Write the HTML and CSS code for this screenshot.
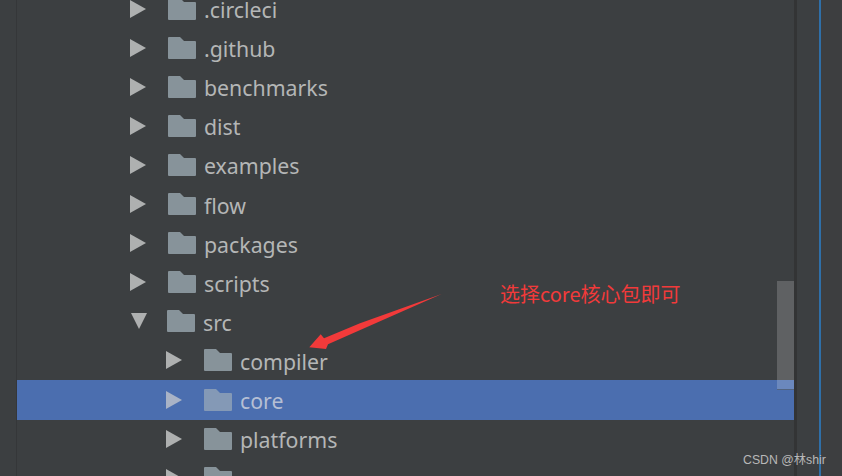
FILE: index.html
```html
<!DOCTYPE html>
<html>

<head>
  <meta name="viewport" content="width=device-width, initial-scale=1">
  <title>Project tree</title>
  <link rel="stylesheet" href="styles.css">
</head>

<body>
  <svg width="0" height="0" class="defs">
    <symbol id="folder" viewBox="0 0 28 22">
      <path d="M0 1 Q0 0 1 0 H12 L16 4 H27 Q28 4 28 5 V21 Q28 22 27 22 H1 Q0 22 0 21 Z" />
    </symbol>
  </svg>

  <div class="window">
    <div class="gutter"></div>

    <div class="tree-panel">
      <ul class="tree">
        <li class="row"><i class="arrow"></i><svg class="folder"><use href="#folder" /></svg><span>.circleci</span></li>
        <li class="row"><i class="arrow"></i><svg class="folder"><use href="#folder" /></svg><span>.github</span></li>
        <li class="row"><i class="arrow"></i><svg class="folder"><use href="#folder" /></svg><span>benchmarks</span></li>
        <li class="row"><i class="arrow"></i><svg class="folder"><use href="#folder" /></svg><span>dist</span></li>
        <li class="row"><i class="arrow"></i><svg class="folder"><use href="#folder" /></svg><span>examples</span></li>
        <li class="row"><i class="arrow"></i><svg class="folder"><use href="#folder" /></svg><span>flow</span></li>
        <li class="row"><i class="arrow"></i><svg class="folder"><use href="#folder" /></svg><span>packages</span></li>
        <li class="row"><i class="arrow"></i><svg class="folder"><use href="#folder" /></svg><span>scripts</span></li>
        <li class="row"><i class="arrow open"></i><svg class="folder"><use href="#folder" /></svg><span>src</span></li>
        <li class="row child"><i class="arrow"></i><svg class="folder"><use href="#folder" /></svg><span>compiler</span></li>
        <li class="row child selected"><i class="arrow"></i><svg class="folder"><use href="#folder" /></svg><span>core</span></li>
        <li class="row child"><i class="arrow"></i><svg class="folder"><use href="#folder" /></svg><span>platforms</span></li>
        <li class="row child"><i class="arrow"></i><svg class="folder"><use href="#folder" /></svg><span></span></li>
      </ul>
      <div class="scroll-thumb"></div>
    </div>

    <div class="divider"></div>
    <div class="side-strip"></div>
    <div class="blue-line"></div>
    <div class="far-strip"></div>

    <!-- 붉은 주석 -->
    <svg class="note-arrow" width="140" height="65" viewBox="0 0 140 65">
      <path d="M132.700 2 L51 31.300 L15 46.300 L11.700 42.300 L0.300 55.300 L17 57 L19 52.300 Z" />
    </svg>
    <div class="note-text">选择core核心包即可</div>
    <div class="watermark">CSDN @林shir</div>
  </div>
</body>

</html>
```

FILE: styles.css
```css
* {
  box-sizing: border-box;
}

html,
body {
  margin: 0;
  height: 100%;
  overflow: hidden;
  background-color: #3c3f41;
}

.defs {
  position: absolute;
}

.window {
  position: relative;
  display: flex;
  width: 842px;
  height: 476px;
  overflow: hidden;
  background-color: #3c3f41;
  font-family: "Noto Sans", "Open Sans", sans-serif;
}

.gutter {
  flex: 0 0 17px;
  border-right: 1px solid #353739;
}

.tree-panel {
  position: relative;
  flex: 0 0 777px;
  overflow: hidden;
}

.tree {
  list-style: none;
  margin: -11px 0 0;
  padding: 0;
}

.row {
  display: flex;
  align-items: center;
  height: 39.1px;
  padding-left: 113px;
  color: #b4b6b6;
  font-size: 21.300px;
}

.row span {
  padding-top: 3px;
  line-height: 18px;
}

.row.child {
  padding-left: 149px;
}

.row.selected {
  height: 40px;
  margin-bottom: -0.9px;
  background-color: #4b6eaf;
  color: #b5bfd4;
}

.arrow {
  flex: none;
  width: 0;
  height: 0;
  margin-right: 22px;
  border-top: 9px solid transparent;
  border-bottom: 9px solid transparent;
  border-left: 16px solid #aeb0b0;
}

.arrow.open {
  margin-left: 0.500px;
  margin-right: 20.500px;
  border-left: 8.500px solid transparent;
  border-right: 8.500px solid transparent;
  border-top: 16px solid #aeb0b0;
  border-bottom: 0;
}

.selected .arrow {
  border-left-color: #a9b3c6;
}

.folder {
  flex: none;
  width: 28px;
  height: 22px;
  margin-right: 8px;
  fill: #87939a;
}

.selected .folder {
  fill: #8499b6;
}

.scroll-thumb {
  position: absolute;
  left: 760px;
  top: 281px;
  width: 17px;
  height: 109px;
  background-color: rgba(255, 255, 255, 0.18);
  border-bottom: 1px solid rgba(60, 63, 65, 0.5);
}

.divider {
  flex: 0 0 3px;
  background-color: #333435;
}

.side-strip {
  flex: 0 0 22px;
}

.blue-line {
  flex: 0 0 2px;
  background-color: #2f6fa8;
}

.far-strip {
  flex: 1;
  background-color: #3d3e40;
}

.note-arrow {
  position: absolute;
  left: 309px;
  top: 292px;
  fill: #f23a3a;
}

.note-text {
  position: absolute;
  left: 500px;
  top: 281px;
  color: #f23a3a;
  font-family: "Noto Sans CJK SC", sans-serif;
  font-size: 20px;
  line-height: 26px;
}

.watermark {
  position: absolute;
  left: 743px;
  top: 452px;
  color: #b8b8b8;
  font-family: "Liberation Sans", "Noto Sans CJK SC", sans-serif;
  font-size: 12.300px;
  line-height: 17px;
}
```
